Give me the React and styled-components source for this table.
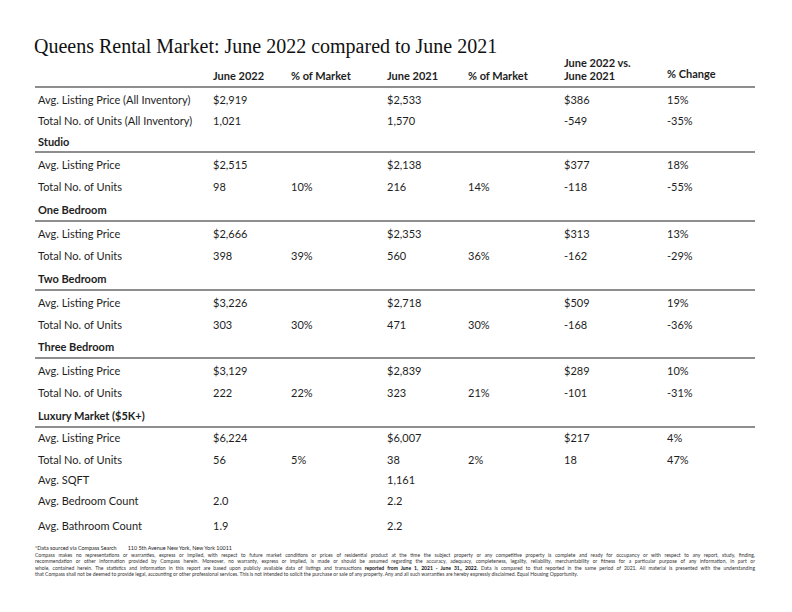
import React from "react";
import styled, { createGlobalStyle } from "styled-components";

const Global = createGlobalStyle`
  html, body { margin: 0; padding: 0; background: #fff; }
  body { font-family: Lato, "Liberation Sans", sans-serif; color: #1e1e1e; }
`;

const Page = styled.div`
  width: 792px;
  height: 612px;
  box-sizing: border-box;
  padding: 36px 37px 0 35px;
  overflow: hidden;
`;

const Title = styled.h1`
  margin: 0 0 0 -1px;
  font-family: "Liberation Serif", "DejaVu Serif", serif;
  font-weight: 400;
  font-size: 20px;
  line-height: 20px;
  color: #111;
`;

const COLS = "175px 78px 96px 81px 96px 103px 1fr";

const HeaderRow = styled.div`
  display: grid;
  grid-template-columns: ${COLS};
  align-items: end;
  padding: 0 0 4px 3px;
  border-bottom: 2px solid #8e8e8e;
  font-weight: 700;
  font-size: 11px;
  line-height: 13px;
`;

const Row = styled.div`
  display: grid;
  grid-template-columns: ${COLS};
  align-items: center;
  height: ${(p) => p.$h}px;
  padding-left: 3px;
  font-size: 11px;
  font-weight: 400;
`;

const Heading = styled.div`
  display: flex;
  align-items: center;
  height: ${(p) => p.$h}px;
  padding-left: 3px;
  border-bottom: 2px solid #8e8e8e;
  font-size: 11px;
  font-weight: 700;
`;

const Cell = styled.span`
  white-space: nowrap;
  position: relative;
  top: ${(p) => p.$dy || 0}px;
`;

const Footer = styled.div`
  margin-top: 7px;
  font-size: 5px;
  line-height: 6.4px;
  color: #333;
`;

const Source = styled.div`
  font-size: 5.4px;
  line-height: 8px;
  color: #222;
  white-space: pre;
`;

const Line = styled.div`
  text-align: justify;
  text-align-last: ${(p) => (p.$last ? "left" : "justify")};
  white-space: nowrap;
`;

const B = styled.b`
  font-weight: 700;
  color: #111;
`;

const sections = [
  {
    name: "Studio",
    h2: 23,
    rows: [
      ["Avg. Listing Price", "$2,515", "", "$2,138", "", "$377", "18%"],
      ["Total No. of Units", "98", "10%", "216", "14%", "-118", "-55%"],
    ],
  },
  {
    name: "One Bedroom",
    h2: 23,
    rows: [
      ["Avg. Listing Price", "$2,666", "", "$2,353", "", "$313", "13%"],
      ["Total No. of Units", "398", "39%", "560", "36%", "-162", "-29%"],
    ],
  },
  {
    name: "Two Bedroom",
    h2: 22,
    rows: [
      ["Avg. Listing Price", "$3,226", "", "$2,718", "", "$509", "19%"],
      ["Total No. of Units", "303", "30%", "471", "30%", "-168", "-36%"],
    ],
  },
  {
    name: "Three Bedroom",
    h2: 23,
    rows: [
      ["Avg. Listing Price", "$3,129", "", "$2,839", "", "$289", "10%"],
      ["Total No. of Units", "222", "22%", "323", "21%", "-101", "-31%"],
    ],
  },
];

const luxury = [
  [19, ["Avg. Listing Price", "$6,224", "", "$6,007", "", "$217", "4%"]],
  [24, ["Total No. of Units", "56", "5%", "38", "2%", "18", "47%"]],
  [16, ["Avg. SQFT", "", "", "1,161", "", "", ""]],
  [26, ["Avg. Bedroom Count", "2.0", "", "2.2", "", "", ""]],
  [24, ["Avg. Bathroom Count", "1.9", "", "2.2", "", "", ""]],
];

const DataRow = ({ h, cells }) => (
  <Row $h={h}>
    {cells.map((c, i) => (
      <Cell key={i}>{c}</Cell>
    ))}
  </Row>
);

export default function App() {
  return (
    <Page>
      <Global />
      <Title>Queens Rental Market: June 2022 compared to June 2021</Title>
      <HeaderRow>
        <span />
        <span>June 2022</span>
        <span>% of Market</span>
        <span>June 2021</span>
        <span>% of Market</span>
        <span>
          June 2022 vs.
          <br />
          June 2021
        </span>
        <Cell $dy={-2}>% Change</Cell>
      </HeaderRow>
      <DataRow h={22} cells={["Avg. Listing Price (All Inventory)", "$2,919", "", "$2,533", "", "$386", "15%"]} />
      <DataRow h={21} cells={["Total No. of Units (All Inventory)", "1,021", "", "1,570", "", "-549", "-35%"]} />
      <Heading $h={20}>Studio</Heading>
      {sections.map((s, si) => (
        <React.Fragment key={s.name}>
          <DataRow h={22} cells={s.rows[0]} />
          <DataRow h={s.h2} cells={s.rows[1]} />
          <Heading $h={22}>{si === sections.length - 1 ? "Luxury Market ($5K+)" : sections[si + 1].name}</Heading>
        </React.Fragment>
      ))}
      {luxury.map(([h, cells], i) => (
        <DataRow key={i} h={h} cells={cells} />
      ))}
      <Footer>
        <Source>{"*Data sourced via Compass Search        110 5th Avenue New York, New York 10011"}</Source>
        <Line>
          Compass makes no representations or warranties, express or implied, with respect to future market conditions or prices of residential product at the time the subject property or any competitive property is complete and ready for occupancy or with respect to any report, study, finding,
        </Line>
        <Line>
          recommendation or other information provided by Compass herein. Moreover, no warranty, express or implied, is made or should be assumed regarding the accuracy, adequacy, completeness, legality, reliability, merchantability or fitness for a particular purpose of any information, in part or
        </Line>
        <Line>
          whole, contained herein. The statistics and information in this report are based upon publicly available data of listings and transactions <B>reported from June 1, 2021 - June 31,, 2022.</B> Data is compared to that reported in the same period of 2021.  All material is presented with the understanding
        </Line>
        <Line $last>
          that Compass shall not be deemed to provide legal, accounting or other professional services. This is not intended to solicit the purchase or sale of any property. Any and all such warranties are hereby expressly disclaimed. Equal Housing Opportunity.
        </Line>
      </Footer>
    </Page>
  );
}
